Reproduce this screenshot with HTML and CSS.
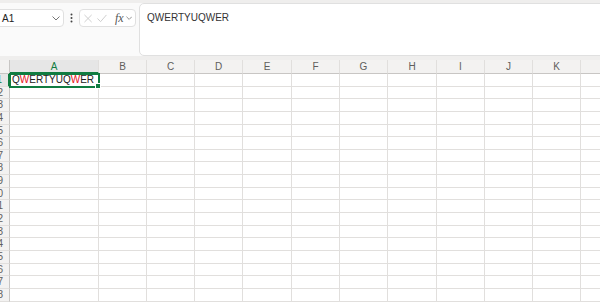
FILE: index.html
```html
<!DOCTYPE html>
<html lang="en">
<head>
    <meta charset="UTF-8">
    <meta name="viewport" content="width=device-width, initial-scale=1.0">
    <title>Sheet</title>
    <link rel="stylesheet" href="styles.css">
</head>
<body>

    <!-- Formula bar -->
    <div class="topbar">
        <div class="namebox">
            <span>A1</span>
            <svg class="chevron" width="8" height="5" viewBox="0 0 8 5"><path d="M0.5 0.5 L4 4 L7.5 0.5" fill="none" stroke="#777" stroke-width="1"/></svg>
        </div>
        <svg class="dots" width="3" height="10" viewBox="0 0 3 10">
            <circle cx="1.5" cy="1.5" r="1" fill="#444"/>
            <circle cx="1.5" cy="5" r="1" fill="#444"/>
            <circle cx="1.5" cy="8.5" r="1" fill="#444"/>
        </svg>
        <div class="fbuttons">
            <svg class="btn-x" width="9" height="9" viewBox="0 0 9 9"><path d="M0.5 0.5 L8.5 8.5 M8.5 0.5 L0.5 8.5" stroke="#c8c8c8" stroke-width="1"/></svg>
            <svg class="btn-ok" width="11" height="9" viewBox="0 0 11 9"><path d="M0.5 4.5 L4 8 L10.5 0.5" fill="none" stroke="#c8c8c8" stroke-width="1"/></svg>
            <span class="fx">fx</span>
            <svg class="chevron" width="7" height="5" viewBox="0 0 7 5"><path d="M0.5 0.5 L3.5 3.5 L6.5 0.5" fill="none" stroke="#888" stroke-width="1"/></svg>
        </div>
        <div class="formula">QWERTYUQWER</div>
    </div>

    <!-- Sheet grid -->
    <div class="sheet" id="sheet"></div>

    <script>
        // Spalten und Zeilen aufbauen
        const cols = ['A', 'B', 'C', 'D', 'E', 'F', 'G', 'H', 'I', 'J', 'K', 'L'];
        const sheet = document.getElementById('sheet');

        function cell(cls, text) {
            const d = document.createElement('div');
            d.className = cls;
            if (text !== undefined) d.innerHTML = text;
            sheet.appendChild(d);
            return d;
        }

        cell('corner');
        cols.forEach(c => cell(c === 'A' ? 'colhead active' : 'colhead', c));

        for (let r = 1; r <= 18; r++) {
            cell(r === 1 ? 'rowhead active' : 'rowhead', '<span>' + r + '</span>');
            cols.forEach(c => {
                if (r === 1 && c === 'A') {
                    cell('cell selected', 'Q<span class="spell">W</span>ERTYUQ<span class="spell">W</span>ER');
                } else {
                    cell('cell');
                }
            });
        }
    </script>

</body>
</html>
```

FILE: styles.css
```css
body {
    margin: 0;
    background-color: #efeeed;
    font-family: 'Liberation Sans', Arial, sans-serif;
    overflow: hidden;
    color: #222;
}
.topbar {
    display: flex;
    align-items: flex-start;
    height: 53px;
    margin-top: 3px;
    background-color: #fafafa;
}
.namebox {
    display: flex;
    align-items: center;
    justify-content: space-between;
    box-sizing: border-box;
    width: 68px;
    height: 18px;
    margin: 6px 0 0 -4px;
    padding: 0 3px 0 5px;
    background-color: #fff;
    border: 1px solid #e0e0e0;
    border-radius: 4px;
    font-size: 10px;
    color: #222;
}
.dots {
    margin: 10px 0 0 6px;
}
.fbuttons {
    display: flex;
    align-items: center;
    box-sizing: border-box;
    width: 57px;
    height: 18px;
    margin: 6px 0 0 6px;
    padding: 0 3px 0 4px;
    background-color: #fff;
    border: 1px solid #e0e0e0;
    border-radius: 4px;
}
.btn-x {
    margin-right: 5px;
}
.btn-ok {
    margin-right: 8px;
}
.fx {
    font-family: 'Liberation Serif', serif;
    font-style: italic;
    font-size: 12px;
    color: #555;
    margin-right: 2px;
}
.formula {
    flex: 1;
    box-sizing: border-box;
    height: 53px;
    margin: 0 -10px 0 3px;
    padding: 8px 7px;
    background-color: #fff;
    border: 1px solid #e0e0e0;
    border-radius: 5px;
    font-size: 10px;
    line-height: 12px;
    color: #333;
}
.sheet {
    display: grid;
    grid-template-columns: 10px 89px 48px 48px 48px 49px 48px 48px 49px 48px 48px 48px 48px;
    grid-template-rows: 14px;
    grid-auto-rows: 12.65px;
    margin-top: 4px;
    background-color: #fff;
}
.corner, .colhead {
    box-sizing: border-box;
    background-color: #f3f2f1;
    border-bottom: 1px solid #c8c6c4;
}
.corner {
    border-right: 1px solid #c8c6c4;
}
.colhead {
    border-right: 1px solid #e1dfdd;
    text-align: center;
    font-size: 10px;
    line-height: 14px;
    color: #605e5c;
}
.colhead.active {
    background-color: #e6e6e6;
    color: #107c41;
    border-bottom: 2px solid #107c41;
}
.rowhead {
    display: flex;
    justify-content: flex-end;
    overflow: hidden;
    box-sizing: border-box;
    padding-right: 6px;
    background-color: #f3f2f1;
    border-right: 1px solid #c8c6c4;
    border-bottom: 1px solid #e1dfdd;
    font-size: 10px;
    line-height: 12px;
    color: #605e5c;
}
.rowhead.active {
    background-color: #e6e6e6;
    color: #107c41;
    border-right: 2px solid #107c41;
}
.cell {
    box-sizing: border-box;
    border-right: 1px solid #e1dfdd;
    border-bottom: 1px solid #e1dfdd;
    font-size: 10px;
    line-height: 12px;
    white-space: nowrap;
}
.cell.selected {
    position: relative;
    padding-left: 2px;
    outline: 2px solid #107c41;
    outline-offset: -1px;
    color: #222;
}
.cell.selected::after {
    content: '';
    position: absolute;
    right: -3px;
    bottom: -3px;
    width: 4px;
    height: 4px;
    background-color: #107c41;
    border: 1px solid #fff;
}
.spell {
    color: #e81123;
}
```
